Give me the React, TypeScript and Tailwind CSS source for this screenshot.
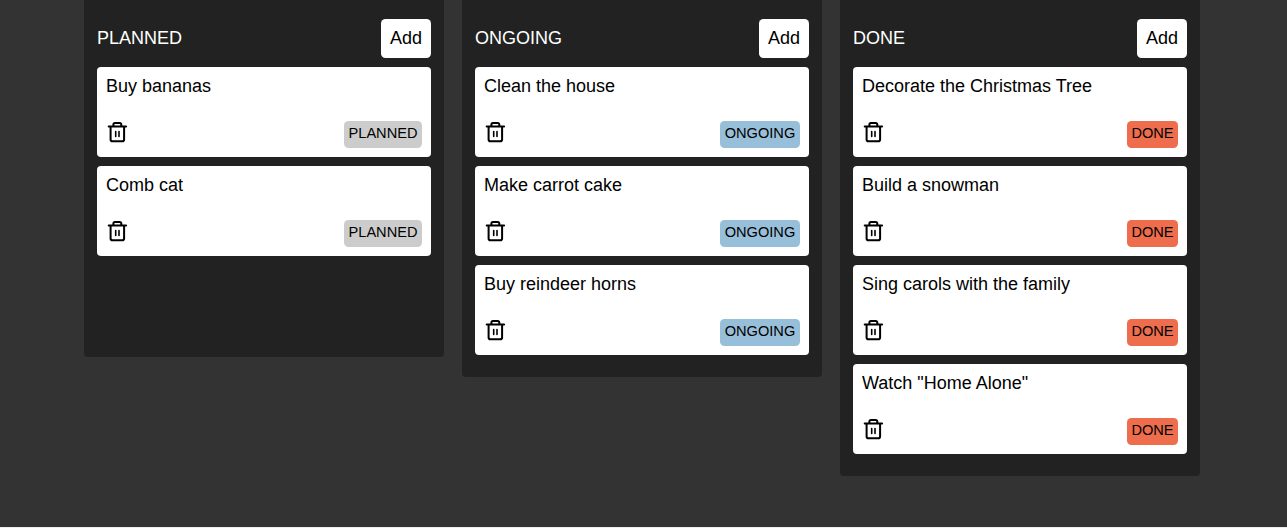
type Status = "PLANNED" | "ONGOING" | "DONE";

const columns: { status: Status; tasks: string[]; height: string; badge: string }[] = [
  { status: "PLANNED", tasks: ["Buy bananas", "Comb cat"], height: "h-[357px]", badge: "bg-[#cccccc] w-[78px]" },
  {
    status: "ONGOING",
    tasks: ["Clean the house", "Make carrot cake", "Buy reindeer horns"],
    height: "h-[377px]",
    badge: "bg-[#98bfd9] w-[80px]",
  },
  {
    status: "DONE",
    tasks: ["Decorate the Christmas Tree", "Build a snowman", "Sing carols with the family", 'Watch "Home Alone"'],
    height: "h-[476px]",
    badge: "bg-[#ed6d4d] w-[51px]",
  },
];

function TrashIcon() {
  return (
    <svg width="22" height="22" viewBox="0 0 22 22" fill="none" stroke="currentColor" strokeWidth="2" strokeLinecap="round" strokeLinejoin="round">
      <path d="M2.7 5.5h17.4M4.6 5.5v12.9a1.8 1.8 0 0 0 1.8 1.8h9.9a1.8 1.8 0 0 0 1.8-1.8V5.5M7.4 5V3.6a1.5 1.5 0 0 1 1.5-1.5h4.9A1.5 1.5 0 0 1 15.3 3.6V5" />
      <path d="M9.7 10.6v4.9M13 10.6v4.9" strokeWidth="1.6" />
    </svg>
  );
}

function Task({ title, status, badge }: { title: string; status: Status; badge: string }) {
  return (
    <li className="flex h-[90px] flex-col justify-between rounded bg-white p-[9px] text-black">
      <p className="leading-5">{title}</p>
      <div className="flex items-start justify-between">
        <button aria-label="Delete task">
          <TrashIcon />
        </button>
        <span className={`h-[27px] rounded-[4.5px] text-center text-[14.6px] leading-[25px] ${badge}`}>{status}</span>
      </div>
    </li>
  );
}

export default function App() {
  return (
    <main className="h-[528px] overflow-hidden border-b border-[#eeeeee] bg-[#333333] pl-[84px] font-['Liberation_Sans',Arial,sans-serif] text-[18px]">
      <div className="flex items-start gap-[18px]">
        {columns.map(({ status, tasks, height, badge }) => (
          <section key={status} className={`w-[360px] shrink-0 rounded-b bg-[#222222] px-[13px] pt-[19px] ${height}`}>
            <header className="flex h-[39px] items-center justify-between text-white">
              <h2>{status}</h2>
              <button className="h-[39px] w-[50px] rounded-[4.5px] bg-white leading-[39px] text-black">Add</button>
            </header>
            <ul className="mt-[9px] flex flex-col gap-[9px]">
              {tasks.map((title) => (
                <Task key={title} title={title} status={status} badge={badge} />
              ))}
            </ul>
          </section>
        ))}
      </div>
    </main>
  );
}
